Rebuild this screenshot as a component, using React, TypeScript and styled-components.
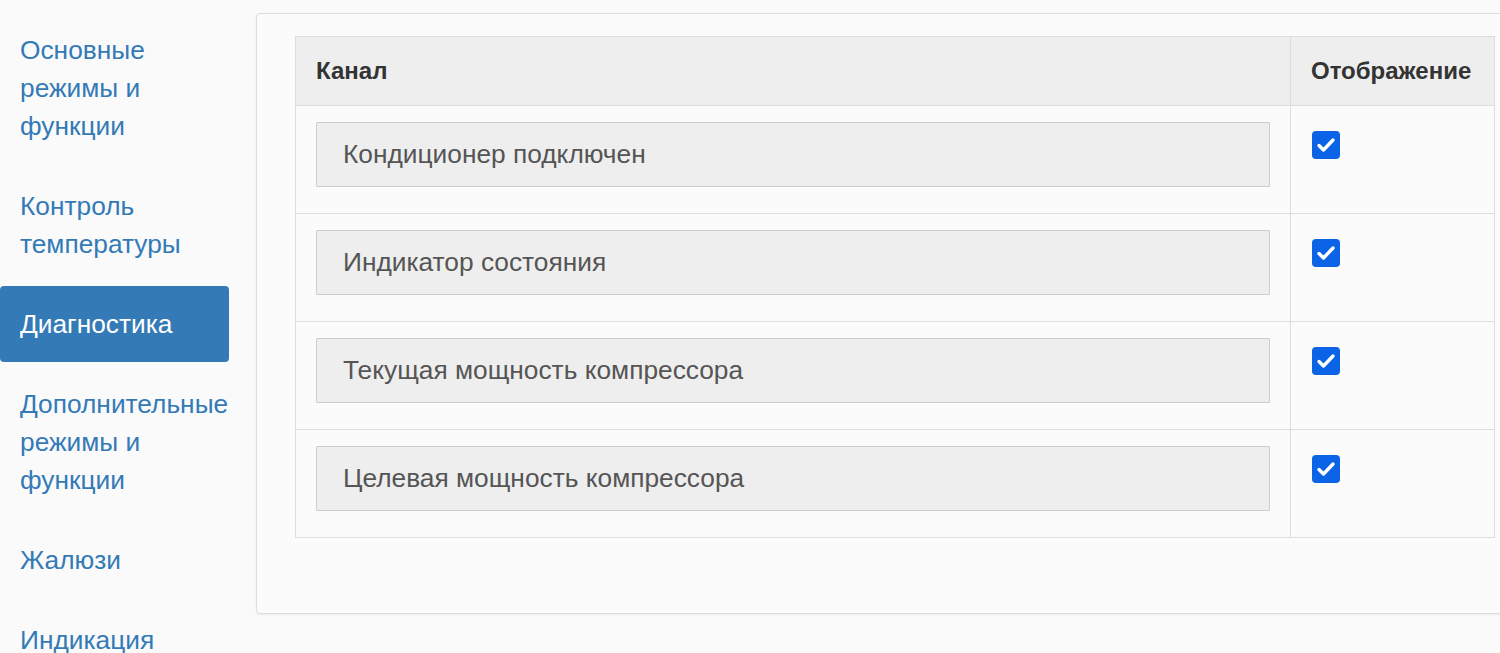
import styled, { createGlobalStyle } from "styled-components";

const GlobalStyle = createGlobalStyle`
  html, body {
    margin: 0;
    padding: 0;
    background: #fafafa;
    overflow: hidden;
  }
  body {
    font-family: "Liberation Sans", Arial, sans-serif;
    color: #333;
  }
`;

const Layout = styled.div`
  display: flex;
  align-items: flex-start;
  gap: 27px;
  padding-top: 12px;
  width: 1600px;
`;

const Nav = styled.ul`
  list-style: none;
  margin: 0;
  padding: 0;
  width: 229px;
  flex-shrink: 0;
  display: flex;
  flex-direction: column;
  gap: 4px;
`;

const NavItem = styled.li<{ $active?: boolean }>`
  padding: 19px 20px;
  font-size: 26.3px;
  line-height: 38px;
  border-radius: 4px;
  color: ${(p) => (p.$active ? "#fff" : "#337ab7")};
  background: ${(p) => (p.$active ? "#337ab7" : "transparent")};
`;

const Panel = styled.div`
  margin-top: 1px;
  width: 1260px;
  flex-shrink: 0;
  box-sizing: border-box;
  padding: 22px 22px 75px 38px;
  background: #fbfbfb;
  border: 1px solid #ddd;
  border-radius: 4px;
  box-shadow: 0 1px 2px rgba(0, 0, 0, 0.06);
`;

const Table = styled.table`
  width: 1200px;
  border-collapse: collapse;
`;

const HeadCell = styled.th<{ $w?: number }>`
  text-align: left;
  background: #eee;
  border: 1px solid #ddd;
  font-size: 24px;
  font-weight: bold;
  color: #333;
  height: 68px;
  padding: 0 20px;
  width: ${(p) => (p.$w ? `${p.$w}px` : "auto")};
`;

const Cell = styled.td`
  border: 1px solid #ddd;
  padding: 16px 20px 26px 20px;
  vertical-align: top;
`;

const ChannelField = styled.div`
  box-sizing: border-box;
  height: 65px;
  display: flex;
  align-items: center;
  padding: 0 26px;
  background: #eee;
  border: 1px solid #ccc;
  border-radius: 1px;
  font-size: 26.3px;
  color: #555;
`;

const Check = styled.span`
  display: inline-flex;
  align-items: center;
  justify-content: center;
  width: 28px;
  height: 28px;
  margin-top: 9px;
  margin-left: 1px;
  border-radius: 4px;
  background: #0b63e5;
`;

const channels = [
  "Кондиционер подключен",
  "Индикатор состояния",
  "Текущая мощность компрессора",
  "Целевая мощность компрессора",
];

const navItems = [
  "Основные режимы и функции",
  "Контроль температуры",
  "Диагностика",
  "Дополнительные режимы и функции",
  "Жалюзи",
  "Индикация",
];

export default function App() {
  return (
    <>
      <GlobalStyle />
      <Layout>
        <Nav>
          {navItems.map((item) => (
            <NavItem key={item} $active={item === "Диагностика"}>
              {item}
            </NavItem>
          ))}
        </Nav>
        <Panel>
          <Table>
            <thead>
              <tr>
                <HeadCell>Канал</HeadCell>
                <HeadCell $w={163}>Отображение</HeadCell>
              </tr>
            </thead>
            <tbody>
              {channels.map((name) => (
                <tr key={name}>
                  <Cell>
                    <ChannelField>{name}</ChannelField>
                  </Cell>
                  <Cell>
                    <Check>
                      <svg width="24" height="24" viewBox="0 0 24 24">
                        <path
                          d="M5 12.5l4.5 4.5 9.5-10"
                          fill="none"
                          stroke="#fff"
                          strokeWidth="3.4"
                          strokeLinecap="round"
                          strokeLinejoin="round"
                        />
                      </svg>
                    </Check>
                  </Cell>
                </tr>
              ))}
            </tbody>
          </Table>
        </Panel>
      </Layout>
    </>
  );
}
